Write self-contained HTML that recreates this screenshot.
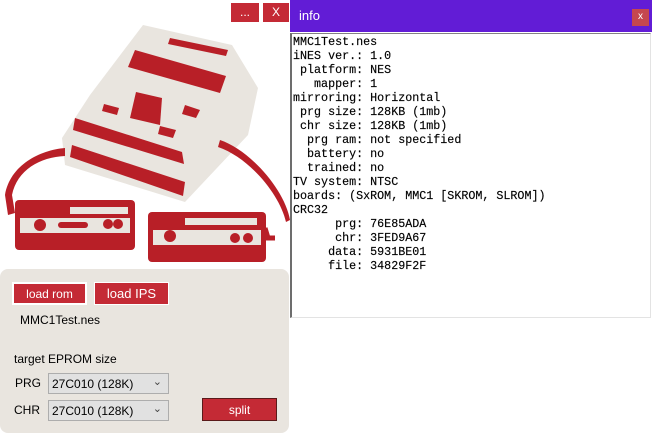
<!DOCTYPE html>
<html><head><style>
*{margin:0;padding:0;box-sizing:border-box}
body{width:652px;height:434px;background:#fff;position:relative;overflow:hidden;font-family:"Liberation Sans",sans-serif;}
.btn{position:absolute;background:#c42a35;color:#fff;font-size:12px;text-align:center;}
.panel{position:absolute;left:0;top:269px;width:289px;height:164px;background:#e9e5df;border-radius:8px;}
.lbl{position:absolute;font-size:12px;color:#000}
.sel{position:absolute;left:48px;width:121px;height:21px;background:#e1e1e1;border:1px solid #adadad;font-size:12px;padding:3px 0 0 3px;}
.sel span{position:absolute;right:6px;top:1px;font-size:11px;color:#444}
pre{position:absolute;left:293px;top:35px;font-family:"Liberation Mono",monospace;font-size:11.7px;line-height:14px;color:#000;-webkit-text-stroke:0.15px #000}
</style></head><body>
<svg width="290" height="270" style="position:absolute;left:0;top:0">
<g fill="#e9e5df">
<polygon points="143,25 232,45 258,88 248,135 185,202 65,165 62,138 90,95"/>
</g>
<g fill="#b81f27">
<polygon points="135,50 226,76 220,93 128,67"/>
<polygon points="170,38 228,50 226,56 168,44"/>
<polygon points="75,118 182,152 184,164 73,130"/>
<polygon points="72,145 185,182 183,196 70,157"/>
<polygon points="136,92 162,98 160,125 130,118"/>
<polygon points="104,104 119,108 117,115 102,111"/>
<polygon points="160,126 176,130 173,138 158,134"/>
<polygon points="185,105 200,110 196,118 182,114"/>
<path d="M65,148 C40,150 10,165 5,195 L8,215 L15,213 L12,195 C17,170 40,157 65,156Z"/>
<path d="M220,140 C250,150 285,190 290,220 L286,222 C280,195 250,158 218,147Z"/>
<path d="M265,228 L268,238 L275,238" fill="none" stroke="#b81f27" stroke-width="5"/>
<rect x="15" y="200" width="120" height="50" rx="4"/>
<rect x="148" y="212" width="118" height="50" rx="4"/>
</g>
<g fill="#e9e5df">
<rect x="20" y="218" width="110" height="15"/>
<rect x="70" y="207" width="58" height="7"/>
<rect x="153" y="230" width="108" height="15"/>
<rect x="185" y="218" width="72" height="7"/>
</g>
<g fill="#b81f27">
<circle cx="40" cy="225" r="6"/><circle cx="108" cy="224" r="5"/><circle cx="118" cy="224" r="5"/>
<rect x="58" y="222" width="30" height="6" rx="3"/>
<circle cx="170" cy="236" r="6"/><circle cx="235" cy="238" r="5"/><circle cx="248" cy="238" r="5"/>
</g>
</svg>
<div class="btn" style="left:231px;top:3px;width:28px;height:19px;line-height:19px">...</div>
<div class="btn" style="left:263px;top:3px;width:26px;height:19px;line-height:19px">X</div>
<div style="position:absolute;left:290px;top:0;width:362px;height:32px;background:#621cd6;"></div>
<div style="position:absolute;left:299px;top:8px;color:#fff;font-size:13px">info</div>
<div class="btn" style="left:632px;top:9px;width:17px;height:17px;line-height:16px;font-size:10px;background:#c5474f">x</div>
<div style="position:absolute;left:290px;top:33px;width:361px;height:285px;background:#fff;border:1px solid #828282;border-right-color:#e3e3e3;border-bottom-color:#e3e3e3;border-left:2px solid #6d6d6d"></div>
<pre>MMC1Test.nes
iNES ver.: 1.0
 platform: NES
   mapper: 1
mirroring: Horizontal
 prg size: 128KB (1mb)
 chr size: 128KB (1mb)
  prg ram: not specified
  battery: no
  trained: no
TV system: NTSC
boards: (SxROM, MMC1 [SKROM, SLROM])
CRC32
      prg: 76E85ADA
      chr: 3FED9A67
     data: 5931BE01
     file: 34829F2F</pre>
<div class="panel"></div>
<div class="btn" style="left:12px;top:282px;width:75px;height:23px;line-height:21px;border:2px solid #fff">load rom</div>
<div class="btn" style="left:94px;top:282px;width:75px;height:23px;line-height:21px;border:1px solid #fff;font-size:13px">load IPS</div>
<div class="lbl" style="left:20px;top:313px">MMC1Test.nes</div>
<div class="lbl" style="left:14px;top:352px">target EPROM size</div>
<div class="lbl" style="left:15px;top:376px">PRG</div>
<div class="lbl" style="left:14px;top:403px">CHR</div>
<div class="sel" style="top:373px">27C010 (128K)<span>&#8964;</span></div>
<div class="sel" style="top:400px">27C010 (128K)<span>&#8964;</span></div>
<div class="btn" style="left:202px;top:398px;width:75px;height:23px;line-height:22px;border:1px solid #5a1a1a">split</div>
</body></html>
